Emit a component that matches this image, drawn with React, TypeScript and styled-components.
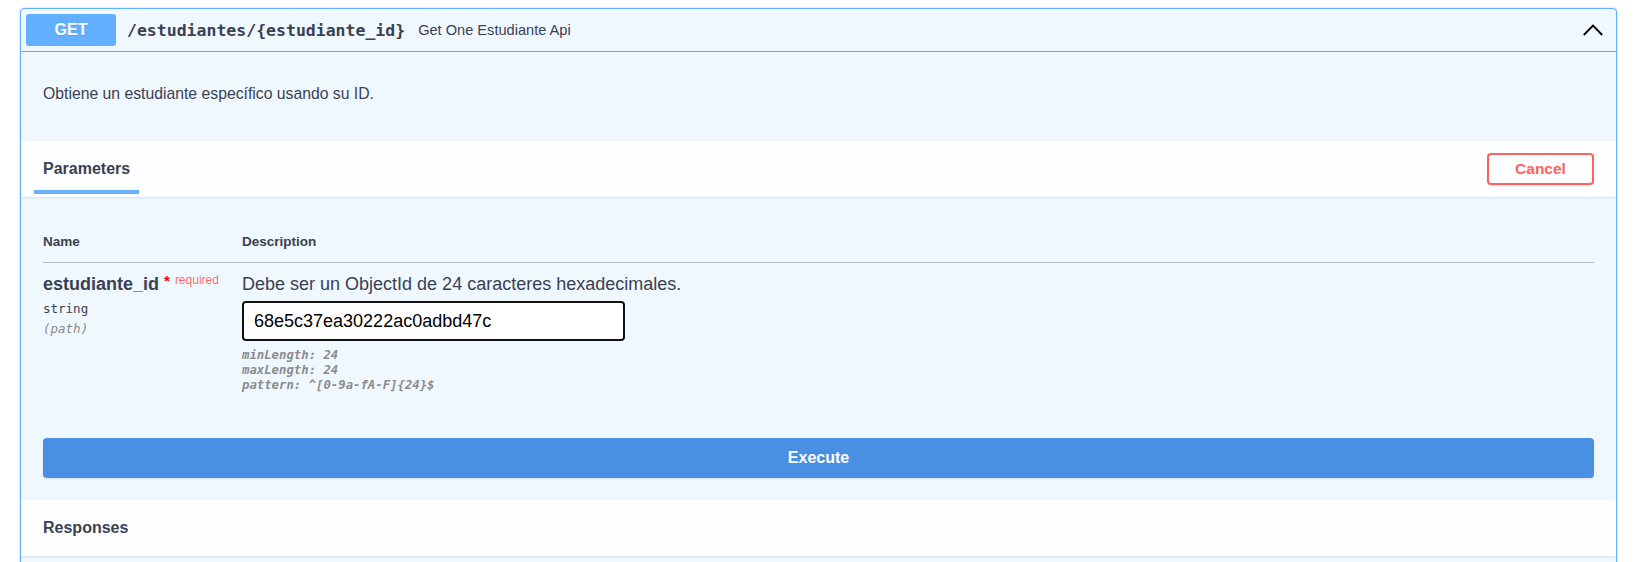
import React from "react";
import styled, { createGlobalStyle } from "styled-components";

const Global = createGlobalStyle`
  html, body {
    margin: 0;
    padding: 0;
    background: #ffffff;
    overflow: hidden;
  }
  body {
    font-family: "Liberation Sans", Arial, sans-serif;
    color: #3b4151;
  }
`;

const Page = styled.div`
  padding: 8px 24px 0 20px;
`;

const OpBlock = styled.div`
  border: 1px solid #61affe;
  border-radius: 4px;
  background: #eff7ff;
  box-shadow: 0 0 3px rgba(0, 0, 0, 0.19);
  overflow: hidden;
`;

const Summary = styled.div`
  display: flex;
  align-items: center;
  height: 42px;
  padding: 0 13px 0 5px;
  border-bottom: 1px solid #61affe;
`;

const Method = styled.span`
  display: flex;
  align-items: center;
  justify-content: center;
  width: 90px;
  height: 32px;
  border-radius: 3px;
  background: #61affe;
  color: #ffffff;
  font-weight: 700;
  font-size: 16px;
  text-shadow: 0 1px 0 rgba(0, 0, 0, 0.1);
`;

const Path = styled.span`
  margin-left: 11px;
  font-family: "DejaVu Sans Mono", monospace;
  font-weight: 700;
  font-size: 16.5px;
  color: #3b4151;
`;

const SummaryDesc = styled.span`
  flex: 1;
  margin-left: 13px;
  font-size: 14.6px;
  color: #3b4151;
`;

const Chevron = styled.svg`
  display: block;
  width: 20px;
  height: 12px;
`;

const Description = styled.div`
  padding: 32px 22px 37px;
  font-size: 15.75px;
  line-height: 20px;
`;

const SectionHeader = styled.div`
  display: flex;
  align-items: center;
  justify-content: space-between;
  height: 56px;
  padding: 0 22px 0 13px;
  background: rgba(255, 255, 255, 0.8);
  box-shadow: 0 1px 2px rgba(0, 0, 0, 0.1);
  position: relative;
`;

const Tab = styled.div`
  align-self: flex-end;
  margin-bottom: 3px;
  display: flex;
  flex-direction: column;
`;

const TabLabel = styled.h4`
  margin: 0;
  padding: 0 9px 11px 9px;
  font-size: 16px;
  line-height: 20px;
  font-weight: 700;
  color: #3b4151;
`;

const TabBar = styled.div`
  height: 4px;
  background: #61affe;
  opacity: 0.95;
`;

const CancelButton = styled.button`
  width: 107px;
  height: 32px;
  border: 2px solid #ff6060;
  border-radius: 4px;
  background: transparent;
  color: #ff6060;
  font-family: "Liberation Sans", Arial, sans-serif;
  font-weight: 700;
  font-size: 15.5px;
  box-shadow: 0 1px 2px rgba(0, 0, 0, 0.1);
  padding: 0;
`;

const SectionTitle = styled.h4`
  margin: 0;
  padding-left: 9px;
  font-size: 16px;
  line-height: 20px;
  font-weight: 700;
  color: #3b4151;
`;

const TableSection = styled.div`
  padding: 37px 22px 22px;
`;

const Table = styled.div`
  display: grid;
  grid-template-columns: 199px 1fr;
`;

const HeadCell = styled.div`
  padding-bottom: 12px;
  border-bottom: 1px solid #b4bcc8;
  font-size: 13.5px;
  line-height: 16px;
  font-weight: 700;
  color: #3b4151;
`;

const NameCell = styled.div`
  padding-top: 10px;
  display: flex;
  flex-direction: column;
`;

const ParamName = styled.div`
  display: flex;
  align-items: flex-start;
  font-size: 18px;
  line-height: 22px;
  font-weight: 700;
  color: #3b4151;
`;

const Star = styled.span`
  margin-left: 5px;
  color: #ff0000;
  font-size: 15px;
  line-height: 16px;
  font-weight: 700;
`;

const Required = styled.span`
  margin-left: 5px;
  color: rgba(255, 0, 0, 0.6);
  font-size: 12px;
  line-height: 14px;
  font-weight: 400;
`;

const ParamType = styled.div<{ $italic?: boolean }>`
  margin-top: ${(p) => (p.$italic ? "4px" : "6px")};
  font-family: "DejaVu Sans Mono", monospace;
  font-size: 12.5px;
  line-height: 16px;
  font-style: ${(p) => (p.$italic ? "italic" : "normal")};
  color: ${(p) => (p.$italic ? "#8a8a8a" : "#3b4151")};
`;

const DescCell = styled.div`
  padding-top: 10px;
  display: flex;
  flex-direction: column;
  align-items: flex-start;
`;

const DescText = styled.div`
  font-size: 18px;
  line-height: 22px;
  color: #3b4151;
`;

const Input = styled.input`
  box-sizing: border-box;
  margin-top: 6px;
  width: 383px;
  height: 40px;
  padding: 0 10px;
  border: 2px solid #111111;
  border-radius: 4px;
  background: #ffffff;
  font-family: "Liberation Sans", Arial, sans-serif;
  font-size: 18px;
  color: #000000;
  outline: none;
`;

const Validation = styled.div`
  margin-top: 7px;
  font-family: "DejaVu Sans Mono", monospace;
  font-size: 12.3px;
  line-height: 15px;
  font-style: italic;
  font-weight: 700;
  color: #8c8c8c;
`;

const ExecuteButton = styled.button`
  display: block;
  width: 100%;
  height: 40px;
  margin-top: 45px;
  border: none;
  border-radius: 4px;
  background: #4990e2;
  color: #ffffff;
  font-family: "Liberation Sans", Arial, sans-serif;
  font-size: 16px;
  font-weight: 700;
  box-shadow: 0 1px 2px rgba(0, 0, 0, 0.1);
`;

const ResponsesBody = styled.div`
  height: 80px;
`;

export default function App() {
  return (
    <>
      <Global />
      <Page>
        <OpBlock>
          <Summary>
            <Method>GET</Method>
            <Path>/estudiantes/{"{estudiante_id}"}</Path>
            <SummaryDesc>Get One Estudiante Api</SummaryDesc>
            <Chevron viewBox="0 0 20 12">
              <polyline
                points="0.8,11 10,1.6 19.2,11"
                fill="none"
                stroke="#000"
                strokeWidth="1.8"
              />
            </Chevron>
          </Summary>

          <Description>Obtiene un estudiante específico usando su ID.</Description>

          <SectionHeader>
            <Tab>
              <TabLabel>Parameters</TabLabel>
              <TabBar />
            </Tab>
            <CancelButton>Cancel</CancelButton>
          </SectionHeader>

          <TableSection>
            <Table>
              <HeadCell>Name</HeadCell>
              <HeadCell>Description</HeadCell>
              <NameCell>
                <ParamName>
                  estudiante_id
                  <Star>*</Star>
                  <Required>required</Required>
                </ParamName>
                <ParamType>string</ParamType>
                <ParamType $italic>(path)</ParamType>
              </NameCell>
              <DescCell>
                <DescText>Debe ser un ObjectId de 24 caracteres hexadecimales.</DescText>
                <Input defaultValue="68e5c37ea30222ac0adbd47c" />
                <Validation>
                  <div>minLength: 24</div>
                  <div>maxLength: 24</div>
                  <div>pattern: ^[0-9a-fA-F]{"{24}"}$</div>
                </Validation>
              </DescCell>
            </Table>
            <ExecuteButton>Execute</ExecuteButton>
          </TableSection>

          <SectionHeader>
            <SectionTitle>Responses</SectionTitle>
          </SectionHeader>
          <ResponsesBody />
        </OpBlock>
      </Page>
    </>
  );
}
